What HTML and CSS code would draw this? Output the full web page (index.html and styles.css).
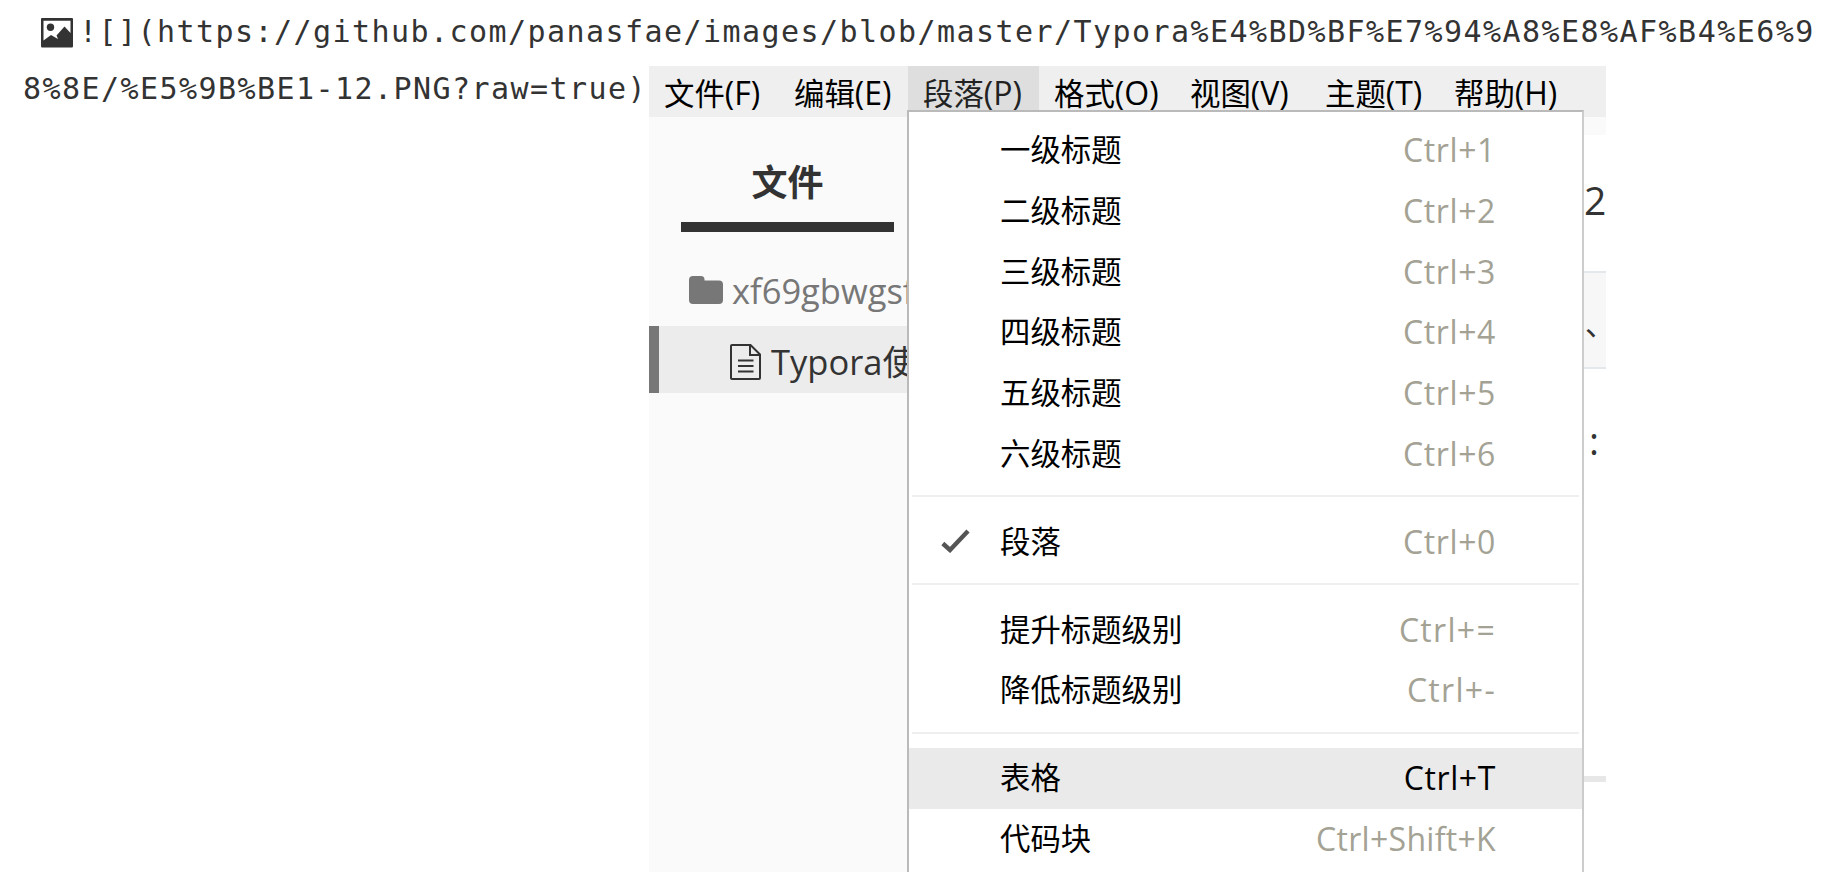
FILE: index.html
```html
<!DOCTYPE html>
<html lang="zh-CN">
<head>
<meta charset="utf-8">
<title>Typora</title>
<link rel="stylesheet" href="styles.css">
</head>
<body>
<div class="source-line first">
  <svg class="pic-icon" viewBox="0 0 32 30"><path fill="#333" fill-rule="evenodd" d="M1 0H31Q32 0 32 1V28Q32 29.500 31 29.500H1Q0 29.500 0 28V1Q0 0 1 0ZM2.500 2.700V22.500L10 17L17 21L15.500 17.500L23.500 8.500L29.500 15V2.700Z"/><circle cx="9.500" cy="9.300" r="3.700" fill="#333"/></svg>
  <span>![](https://github.com/panasfae/images/blob/master/Typora%E4%BD%BF%E7%94%A8%E8%AF%B4%E6%9</span>
</div>
<div class="second">
  <div class="source-line rest">8%8E/%E5%9B%BE1-12.PNG?raw=true)</div>
  <div class="app">
    <nav class="menubar">
      <span>文件<i>(F)</i></span><span>编辑<i>(E)</i></span><span class="open">段落<i>(P)</i></span><span>格式<i>(O)</i></span><span>视图<i>(V)</i></span><span>主题<i>(T)</i></span><span>帮助<i>(H)</i></span>
    </nav>
    <div class="body">
      <aside class="sidebar">
        <div class="tab">文件</div>
        <div class="entry folder">
          <svg class="folder-icon" viewBox="0 0 34 28"><path fill="#777" d="M4 0H12Q15.500 0 15.500 3.500V4.500H30Q34 4.500 34 8.500V24Q34 28 30 28H4Q0 28 0 24V4Q0 0 4 0Z"/></svg>
          <span>xf69gbwgsf</span>
        </div>
        <div class="entry file">
          <svg class="file-icon" viewBox="0 0 31 36" fill="none" stroke="#333" stroke-width="2"><path d="M2 1H20.500L30 10.500V34Q30 35 29 35H2Q1 35 1 34V2Q1 1 2 1ZM20 1V11H30M8 16.500H23.500M8 22H23.500M8 27.500H23.500"/></svg>
          <span>Typora使</span>
        </div>
      </aside>
      <main class="document">
        <div class="strip"></div>
        <div class="heading">2</div>
        <div class="quote">、</div>
        <div class="colon">:</div>
        <div class="rule"></div>
        <div class="semi">;</div>
      </main>
    </div>
    <div class="popup">
      <div class="item">一级标题<kbd>Ctrl+1</kbd></div>
      <div class="item">二级标题<kbd>Ctrl+2</kbd></div>
      <div class="item">三级标题<kbd>Ctrl+3</kbd></div>
      <div class="item">四级标题<kbd>Ctrl+4</kbd></div>
      <div class="item">五级标题<kbd>Ctrl+5</kbd></div>
      <div class="item">六级标题<kbd>Ctrl+6</kbd></div>
      <div class="sep"></div>
      <div class="item"><svg class="check" viewBox="0 0 29 24"><path d="M1.800 14.500L9 21L27 2" fill="none" stroke="#555" stroke-width="4.400"/></svg>段落<kbd>Ctrl+0</kbd></div>
      <div class="sep"></div>
      <div class="item">提升标题级别<kbd class="wide">Ctrl+=</kbd></div>
      <div class="item">降低标题级别<kbd class="wide">Ctrl+-</kbd></div>
      <div class="sep"></div>
      <div class="item active">表格<kbd>Ctrl+T</kbd></div>
      <div class="item">代码块<kbd class="long">Ctrl+Shift+K</kbd></div>
    </div>
  </div>
</div>
</body>
</html>
```
FILE: styles.css
```css
* { box-sizing: border-box; }
body { margin: 0; background: #fff; overflow: hidden; }
.source-line {
  font: 30px/48px "DejaVu Sans Mono", monospace;
  letter-spacing: 1.44px;
  color: #333;
  white-space: nowrap;
}
.first { display: flex; height: 66px; padding: 7px 0 0 41px; }
.first span { padding-top: 1px; }
.pic-icon { width: 32px; height: 30px; margin: 11px 6px 0 0; }
.second { display: flex; }
.rest { width: 649px; margin-top: -1px; padding: 0 0 0 23px; flex: none; }
.app {
  position: relative;
  width: 957px;
  height: 806px;
  overflow: hidden;
  font-family: "Open Sans", "Noto Sans CJK SC", sans-serif;
}
.menubar {
  display: grid;
  grid-template-columns: 130px 129px 131px 136px 135px 129px 1fr;
  height: 51px;
  background: #efefef;
  font-size: 30.4px;
  line-height: 56px;
  color: #000;
}
.menubar span { padding-left: 15px; white-space: nowrap; height: 51px; }
.menubar i { font-style: normal; font-size: 32px; line-height: 1; }
.menubar .open { background: #dedede; color: #222; }
.body { display: flex; height: 755px; }
.sidebar { width: 259px; background: #fafafa; flex: none; overflow: hidden; }
.tab {
  width: 213px;
  height: 115px;
  margin-left: 32px;
  padding-top: 38px;
  border-bottom: 10px solid #333;
  text-align: center;
  font-size: 36px;
  line-height: 56px;
  font-weight: 700;
  color: #333;
}
.entry { display: flex; align-items: center; font-size: 34.5px; white-space: nowrap; height: 67px; }
.folder { margin-top: 23px; padding-left: 40px; color: #777; height: 71px; }
.folder-icon { width: 34px; height: 28px; margin-right: 9px; flex: none; margin-top: -1px; }
.file { background: #ececec; border-left: 10px solid #777; padding-left: 71px; color: #333; }
.file-icon { width: 31px; height: 36px; margin-right: 10px; margin-top: 5px; flex: none; }
.document { flex: 1; padding-left: 675px; color: #333; overflow: hidden; }
.strip { height: 18px; background: #fafafa; }
.heading { height: 136px; padding: 39px 0 0 1px; font-size: 39px; line-height: 52px; }
.quote { height: 98px; background: #f7f7f7; border: solid #e5e8eb; border-width: 2px 0; font-size: 30px; line-height: 98px; padding-left: 2px; font-family: "Noto Sans CJK SC", sans-serif; }
.colon { height: 407px; padding: 47px 0 0 6px; font-size: 38px; line-height: 48px; }
.rule { height: 6px; background: #e7e7e7; }
.semi { font-size: 34px; line-height: 48px; padding-top: 48px; margin-left: -6px; color: #777; }
.popup {
  position: absolute;
  left: 258px;
  top: 44px;
  width: 677px;
  height: 780px;
  border: 2px solid #bababa;
  border-right-color: #ccc;
  background: #fff;
  padding-top: 8px;
}
.item {
  position: relative;
  display: flex;
  justify-content: space-between;
  align-items: center;
  height: 60.700px;
  padding: 0 86px 0 91px;
  font-size: 30.400px;
  line-height: 60px;
  color: #000;
}
.item kbd { font-family: "Open Sans", sans-serif; font-size: 32px; letter-spacing: .6px; color: #a3a294; }
.item .wide { letter-spacing: 1.300px; }
.item .long { letter-spacing: .300px; }
.item.active kbd { color: #000; }
.active { background: #eaeaea; }
.check { position: absolute; left: 32px; top: 18px; width: 29px; height: 24px; }
.sep { height: 27.300px; padding-top: 11px; }
.sep::before { content: ""; display: block; height: 2px; margin: 0 3px; background: #efefef; }
```
